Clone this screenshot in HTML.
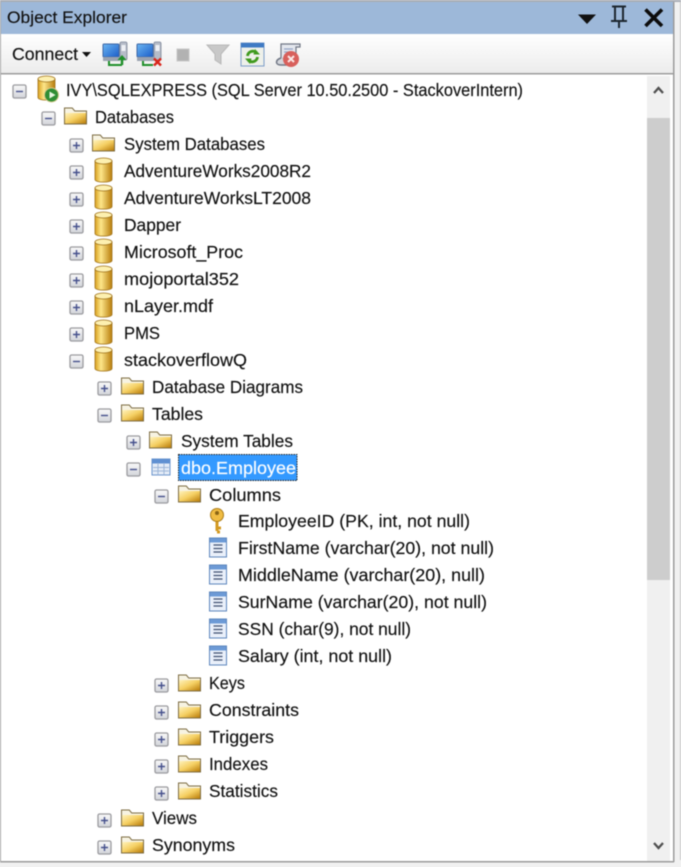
<!DOCTYPE html>
<html lang="en">
<head>
<meta charset="utf-8">
<title>Object Explorer</title>
<style>
html,body{margin:0;padding:0;width:681px;height:867px;overflow:hidden;background:#f0f0f0}
svg{display:block;filter:blur(.5px)}
text{font-family:"Liberation Sans",sans-serif;font-size:17.5px;fill:#111;stroke:#111;stroke-width:.15px}
</style>
</head>
<body>
<svg width="681" height="867" viewBox="0 0 681 867" xmlns="http://www.w3.org/2000/svg">
<defs>
<linearGradient id="tb" x1="0" y1="0" x2="0" y2="1"><stop offset="0" stop-color="#ffffff"/><stop offset="1" stop-color="#ececec"/></linearGradient>
<linearGradient id="fo" x1="0" y1="0" x2="1" y2="1"><stop offset="0" stop-color="#fff3bd"/><stop offset=".5" stop-color="#f5cf62"/><stop offset="1" stop-color="#b97c08"/></linearGradient>
<linearGradient id="db" x1="0" y1="0" x2="1" y2="0"><stop offset="0" stop-color="#d9a11e"/><stop offset=".35" stop-color="#fde68a"/><stop offset="1" stop-color="#b87d0c"/></linearGradient>
<linearGradient id="bx" x1="0" y1="0" x2="0" y2="1"><stop offset="0" stop-color="#fafafa"/><stop offset="1" stop-color="#d2d4da"/></linearGradient>
<linearGradient id="mon" x1="0" y1="0" x2="1" y2="1"><stop offset="0" stop-color="#6cb6f2"/><stop offset="1" stop-color="#1a5cc8"/></linearGradient>

<g id="p"><rect x="-6" y="-6" width="13" height="13" rx="1.500" fill="url(#bx)" stroke="#9a9a9e" stroke-width="1.300"/><path d="M-3 .5H4M.5-3V4" stroke="#45508c" stroke-width="1.400"/></g>
<g id="m"><rect x="-6" y="-6" width="13" height="13" rx="1.500" fill="url(#bx)" stroke="#9a9a9e" stroke-width="1.300"/><path d="M-3 .5H4" stroke="#45508c" stroke-width="1.400"/></g>
<g id="f"><path d="M0-9.500H8.500L11-6.500H23V7.500H0Z" fill="#7d6c42"/><path d="M1-8.500H8L10.500-5.500H22V-4H1Z" fill="#f7f3e2"/><rect x="1" y="-4" width="21" height="10.500" fill="url(#fo)"/></g>
<g id="d"><path d="M0-9V9.500C0 13 17 13 17 9.500V-9Z" fill="url(#db)" stroke="#a0721a" stroke-width=".8"/><ellipse cx="8.500" cy="-9" rx="8.500" ry="3" fill="#fdf0b0" stroke="#a0721a" stroke-width=".8"/></g>
<g id="c"><rect x=".5" y="-10" width="17" height="19" fill="#eaf0fa" stroke="#5d86bd"/><rect x="1" y="-9.500" width="16" height="4" fill="#6c9ad6"/><path d="M4.500-3H13.500M4.500 .5H13.500M4.500 4H13.500" stroke="#3f4f70" stroke-width="1.300"/></g>
</defs>

<!-- chrome -->
<rect width="681" height="867" fill="#f1f1f1"/>
<rect x="0" y="0" width="681" height="2" fill="#a9adb5"/>
<rect x="0" y="2" width="673" height="32" fill="#9db8d9"/>
<rect x="0" y="34" width="673" height="39" fill="url(#tb)"/>
<rect x="0" y="74" width="673" height="787" fill="#ffffff"/>
<rect x="0" y="73" width="674" height="1.500" fill="#9c9c9c"/>
<rect x="0" y="861" width="674" height="1.500" fill="#9c9c9c"/>
<rect x="0" y="2" width="1" height="860" fill="#a8a8a8"/>
<rect x="673" y="2" width="1.500" height="860" fill="#9c9c9c"/>
<rect x="680" y="2" width="1" height="858" fill="#c8c8c8"/>

<!-- title -->
<text x="7" y="23" textLength="120" lengthAdjust="spacingAndGlyphs" style="font-size:17px">Object Explorer</text>
<path d="M578 14.500H596L587 24Z" fill="#111"/>
<path d="M612 6.500H626M615 7V20.500M623 7V20.500M611 21H627M619 21V28" stroke="#1d2730" stroke-width="2" fill="none"/>
<path d="M645.500 9.500L662 26M662 9.500L645.500 26" stroke="#0c0c0c" stroke-width="3.600" fill="none"/>

<!-- toolbar -->
<text x="12" y="60" textLength="66" lengthAdjust="spacingAndGlyphs" style="font-size:17.5px">Connect</text>
<path d="M82 52H91L86.500 57Z" fill="#111"/>

<rect x="120" y="42" width="7" height="18" rx="1.500" fill="#b6bcc8" stroke="#7b8496" stroke-width=".8"/><rect x="121.500" y="45" width="4" height="6" fill="#eef0f5"/>
<rect x="103" y="44" width="16" height="13" rx="1" fill="url(#mon)" stroke="#3e66a4"/><rect x="103" y="57" width="17" height="4" fill="#9aa2b0"/>
<path d="M109 61V65H122" fill="none" stroke="#1f8f2a" stroke-width="2"/><path d="M122 65V59" stroke="#1f8f2a" stroke-width="2.500"/><path d="M117.500 60L122 55L126.500 60Z" fill="#1f8f2a"/>

<rect x="154" y="42" width="7" height="18" rx="1.500" fill="#b6bcc8" stroke="#7b8496" stroke-width=".8"/><rect x="155.500" y="45" width="4" height="6" fill="#eef0f5"/>
<rect x="137" y="44" width="16" height="13" rx="1" fill="url(#mon)" stroke="#3e66a4"/><rect x="137" y="57" width="17" height="4" fill="#9aa2b0"/>
<path d="M143 61V65H153" fill="none" stroke="#1f8f2a" stroke-width="2"/><path d="M154 58.500L161 65.500M161 58.500L154 65.500" stroke="#d8261c" stroke-width="2.500"/>

<rect x="177" y="49" width="12" height="12" fill="#b2b2b2" stroke="#c8c8c8"/>
<path d="M207 45H229L221 54V64L215 60V54Z" fill="#c8c8c8" stroke="#b8b8b8"/>

<rect x="241" y="43" width="23" height="23" fill="#eef0ea" stroke="#7c9cc8" stroke-width="1"/><rect x="241" y="43" width="23" height="4.500" fill="#3f7ac4"/>
<path d="M247.500 56A5.500 5.500 0 0 1 256.500 52.500M257.500 57A5.500 5.500 0 0 1 248.500 60.500" fill="none" stroke="#3f9a1e" stroke-width="2.800"/><path d="M255 49L260 54.500H253.500ZM250 64L245 58.500H251.500Z" fill="#3f9a1e"/>

<path d="M281 44H300V47H296V57L281 59Z" fill="#e4e7ee" stroke="#6f7684" stroke-width="1.200"/><path d="M284 49H293M284 52H291M284 55H289" stroke="#93a2c4" stroke-width="1.200"/>
<path d="M281 58C275 60 275 65 281 65H291V60" fill="#d4d6dc" stroke="#6f7684" stroke-width="1.500"/>
<circle cx="291" cy="59" r="8" fill="#d8605c"/><path d="M288 56L294 62M294 56L288 62" stroke="#fbe8e6" stroke-width="2"/>

<!-- scrollbar -->
<rect x="647" y="76" width="23" height="785" fill="#f0f0f0"/>
<rect x="647" y="118" width="23" height="462" fill="#cdcdcd"/>
<path d="M654 93L658.500 88L663 93" fill="none" stroke="#505050" stroke-width="2.300"/>
<path d="M654 843L658.500 848L663 843" fill="none" stroke="#505050" stroke-width="2.300"/>

<!-- server -->
<use href="#m" x="19" y="91"/>
<use href="#d" x="38" y="88"/>
<circle cx="51.500" cy="95" r="7" fill="#2f8e34" stroke="#d5c98a"/><path d="M49.500 91.500L55.500 95L49.500 98.500Z" fill="#e8f6e0"/>
<text x="66" y="96" textLength="457" lengthAdjust="spacingAndGlyphs">IVY\SQLEXPRESS (SQL Server 10.50.2500 - StackoverIntern)</text>

<use href="#m" x="48" y="118"/><use href="#f" x="64" y="117"/>
<text x="95" y="123" textLength="79" lengthAdjust="spacingAndGlyphs">Databases</text>

<use href="#p" x="76" y="145"/><use href="#f" x="92" y="144"/>
<text x="124" y="150" textLength="141" lengthAdjust="spacingAndGlyphs">System Databases</text>

<use href="#p" x="76" y="172"/><use href="#d" x="95" y="170"/>
<text x="124" y="177" textLength="187" lengthAdjust="spacingAndGlyphs">AdventureWorks2008R2</text>

<use href="#p" x="76" y="199"/><use href="#d" x="95" y="197"/>
<text x="124" y="204" textLength="187" lengthAdjust="spacingAndGlyphs">AdventureWorksLT2008</text>

<use href="#p" x="76" y="226"/><use href="#d" x="95" y="224"/>
<text x="124" y="231" textLength="57" lengthAdjust="spacingAndGlyphs">Dapper</text>

<use href="#p" x="76" y="253"/><use href="#d" x="95" y="251"/>
<text x="124" y="258" textLength="119" lengthAdjust="spacingAndGlyphs">Microsoft_Proc</text>

<use href="#p" x="76" y="280"/><use href="#d" x="95" y="278"/>
<text x="124" y="285" textLength="115" lengthAdjust="spacingAndGlyphs">mojoportal352</text>

<use href="#p" x="76" y="307"/><use href="#d" x="95" y="305"/>
<text x="124" y="312" textLength="89" lengthAdjust="spacingAndGlyphs">nLayer.mdf</text>

<use href="#p" x="76" y="334"/><use href="#d" x="95" y="332"/>
<text x="124" y="339" textLength="36" lengthAdjust="spacingAndGlyphs">PMS</text>

<use href="#m" x="76" y="361"/><use href="#d" x="95" y="359"/>
<text x="124" y="366" textLength="123" lengthAdjust="spacingAndGlyphs">stackoverflowQ</text>

<use href="#p" x="104" y="388"/><use href="#f" x="121" y="387"/>
<text x="152" y="393" textLength="151" lengthAdjust="spacingAndGlyphs">Database Diagrams</text>

<use href="#m" x="104" y="415"/><use href="#f" x="121" y="414"/>
<text x="152" y="420" textLength="51" lengthAdjust="spacingAndGlyphs">Tables</text>

<use href="#p" x="133" y="442"/><use href="#f" x="149" y="441"/>
<text x="181" y="447" textLength="112" lengthAdjust="spacingAndGlyphs">System Tables</text>

<use href="#m" x="133" y="469"/>
<rect x="152" y="459" width="18" height="16" fill="#e4ecf7" stroke="#6c95cc"/><rect x="152" y="459" width="18" height="4.500" fill="#5f90d2"/><path d="M153 467.500H169M153 471H169M158 463V475M164 463V475" stroke="#9db6d8"/>
<rect x="178.500" y="454.500" width="118.500" height="26" fill="#3399ff" stroke="#222" stroke-dasharray="1.500 1"/>
<text x="181" y="474" textLength="115" lengthAdjust="spacingAndGlyphs" style="fill:#fff;stroke:#fff">dbo.Employee</text>

<use href="#m" x="161" y="496"/><use href="#f" x="178" y="495"/>
<text x="209" y="501" textLength="72" lengthAdjust="spacingAndGlyphs">Columns</text>

<path d="M217 520V531M217 528H221M217 532H220" fill="none" stroke="#d39a22" stroke-width="3"/>
<circle cx="217" cy="515" r="6.500" fill="#f0bc42" stroke="#ad7e1a"/><circle cx="217" cy="513" r="2" fill="#8a6414"/>
<text x="238" y="527" textLength="232" lengthAdjust="spacingAndGlyphs">EmployeeID (PK, int, not null)</text>

<use href="#c" x="209" y="548"/>
<text x="238" y="554" textLength="256" lengthAdjust="spacingAndGlyphs">FirstName (varchar(20), not null)</text>

<use href="#c" x="209" y="575"/>
<text x="238" y="581" textLength="247" lengthAdjust="spacingAndGlyphs">MiddleName (varchar(20), null)</text>

<use href="#c" x="209" y="602"/>
<text x="238" y="608" textLength="249" lengthAdjust="spacingAndGlyphs">SurName (varchar(20), not null)</text>

<use href="#c" x="209" y="629"/>
<text x="238" y="635" textLength="173" lengthAdjust="spacingAndGlyphs">SSN (char(9), not null)</text>

<use href="#c" x="209" y="656"/>
<text x="238" y="662" textLength="154" lengthAdjust="spacingAndGlyphs">Salary (int, not null)</text>

<use href="#p" x="161" y="685"/><use href="#f" x="178" y="684"/>
<text x="209" y="689" textLength="36" lengthAdjust="spacingAndGlyphs">Keys</text>

<use href="#p" x="161" y="712"/><use href="#f" x="178" y="711"/>
<text x="209" y="716" textLength="90" lengthAdjust="spacingAndGlyphs">Constraints</text>

<use href="#p" x="161" y="739"/><use href="#f" x="178" y="738"/>
<text x="209" y="743" textLength="65" lengthAdjust="spacingAndGlyphs">Triggers</text>

<use href="#p" x="161" y="766"/><use href="#f" x="178" y="765"/>
<text x="209" y="770" textLength="59" lengthAdjust="spacingAndGlyphs">Indexes</text>

<use href="#p" x="161" y="793"/><use href="#f" x="178" y="792"/>
<text x="209" y="797" textLength="69" lengthAdjust="spacingAndGlyphs">Statistics</text>

<use href="#p" x="104" y="820"/><use href="#f" x="121" y="819"/>
<text x="152" y="824" textLength="45" lengthAdjust="spacingAndGlyphs">Views</text>

<use href="#p" x="104" y="847"/><use href="#f" x="121" y="846"/>
<text x="152" y="851" textLength="83" lengthAdjust="spacingAndGlyphs">Synonyms</text>
</svg>
</body>
</html>
